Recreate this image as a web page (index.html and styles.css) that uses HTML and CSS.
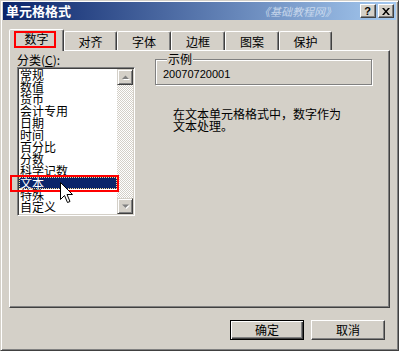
FILE: index.html
```html
<!DOCTYPE html>
<html lang="zh">
<head>
<meta charset="utf-8">
<title>单元格格式</title>
<link rel="stylesheet" href="styles.css">
</head>
<body>
<div class="window">
  <div class="titlebar">
    <span class="title">单元格格式</span>
    <span class="watermark">《基础教程网》</span>
    <div class="caption-btns">
      <span class="cap-btn help">?</span>
      <span class="cap-btn close"><svg width="8" height="7" viewBox="0 0 8 7"><path d="M0 0h2l2 2.5L6 0h2L5 3.5 8 7H6L4 4.5 2 7H0l3-3.5z" fill="#000"/></svg></span>
    </div>
  </div>
  <div class="content">
    <div class="tabs">
      <div class="tab active w55">数字<span class="mark mark-tab"></span></div>
      <div class="tab w53">对齐</div>
      <div class="tab w54">字体</div>
      <div class="tab w54">边框</div>
      <div class="tab w54">图案</div>
      <div class="tab w53">保护</div>
    </div>
    <div class="panel">
      <div class="left-col">
        <div class="label">分类(<u>C</u>):</div>
        <div class="listbox">
          <ul class="items">
            <li>常规</li>
            <li>数值</li>
            <li>货币</li>
            <li>会计专用</li>
            <li>日期</li>
            <li>时间</li>
            <li>百分比</li>
            <li>分数</li>
            <li>科学记数</li>
            <li class="selected">文本</li>
            <li>特殊</li>
            <li>自定义</li>
          </ul>
          <div class="scrollbar">
            <div class="sb-btn"><svg width="14" height="14" viewBox="0 0 14 14"><path d="M4 9h7L7.5 5.5z" fill="#fff" transform="translate(1 1)"/><path d="M4 9h7L7.5 5.5z" fill="#808080"/></svg></div>
            <div class="sb-track"></div>
            <div class="sb-btn"><svg width="14" height="14" viewBox="0 0 14 14"><path d="M4 5.5h7L7.5 9z" fill="#fff" transform="translate(1 1)"/><path d="M4 5.5h7L7.5 9z" fill="#808080"/></svg></div>
          </div>
        </div>
      </div>
      <div class="right-col">
        <fieldset class="sample">
          <legend>示例</legend>
          <div class="sample-value">20070720001</div>
        </fieldset>
        <p class="desc">在文本单元格格式中，数字作为文本处理。</p>
      </div>
    </div>
    <div class="buttons">
      <button class="btn default">确定</button>
      <button class="btn">取消</button>
    </div>
  </div>
  <div class="mark mark-item"></div>
  <svg class="cursor" width="14" height="22" viewBox="0 0 14 22"><path d="M0.5 0.5V17.5L4.5 13.5L7.5 20.5L10 19.5L7 12.5H12.5Z" fill="#fff" stroke="#000" stroke-width="1"/></svg>
</div>
</body>
</html>
```
FILE: styles.css
```css
* { box-sizing: border-box; }
html, body { margin: 0; padding: 0; }
body {
  width: 399px;
  height: 351px;
  overflow: hidden;
  background: #d4d0c8;
  font-family: "Noto Sans CJK SC", "Liberation Sans", sans-serif;
  font-size: 12px;
  line-height: 12px;
  color: #000;
}
.window {
  position: relative;
  width: 399px;
  height: 351px;
  background: #d4d0c8;
  border: 1px solid;
  border-color: #d4d0c8 #404040 #404040 #d4d0c8;
  box-shadow: inset 1px 1px #fff, inset -1px -1px #808080;
  padding: 1px 2px 0 2px;
}
.titlebar {
  height: 18px;
  display: flex;
  align-items: center;
  background: linear-gradient(to right, #0a246a, #a6caf0);
  padding: 0 2px 0 3px;
}
.title {
  color: #fff;
  font-weight: bold;
  font-size: 13px;
  line-height: 14px;
}
.watermark {
  margin-left: auto;
  margin-right: 24px;
  color: #dfe8f6;
  font-size: 11px;
  line-height: 12px;
  font-style: italic;
  opacity: 0.75;
}
.caption-btns { display: flex; gap: 2px; }
.cap-btn {
  width: 16px;
  height: 14px;
  background: #d4d0c8;
  border: 1px solid;
  border-color: #fff #404040 #404040 #fff;
  box-shadow: inset -1px -1px #808080;
  display: flex;
  align-items: center;
  justify-content: center;
  font: bold 11px/11px "Liberation Sans", sans-serif;
  padding-right: 1px;
}
.content { padding: 9px 6px 0 6px; }
.tabs {
  display: flex;
  align-items: flex-end;
  height: 21px;
}
.tab {
  position: relative;
  height: 19px;
  border: 1px solid;
  border-bottom: 0;
  border-color: #fff #404040 transparent #fff;
  border-radius: 2px 2px 0 0;
  box-shadow: inset -1px 0 #808080;
  text-align: center;
  padding-top: 4px;
}
.tab.active {
  height: 22px;
  margin-bottom: -1px;
  z-index: 1;
  background: #d4d0c8;
  padding-top: 3px;
}
.w53 { width: 53px; }
.w54 { width: 54px; }
.w55 { width: 55px; }
.mark { position: absolute; border: 2px solid #ff0000; pointer-events: none; }
.mark-tab { left: 4px; top: 1px; width: 42px; height: 17px; }
.mark-item { left: 9px; top: 174px; width: 109px; height: 17px; z-index: 2; }
.panel {
  height: 258px;
  border: 1px solid;
  border-color: #fff #404040 #404040 #fff;
  box-shadow: inset -1px -1px #808080;
  display: flex;
  padding: 3px 0 0 7px;
}
.left-col { width: 118px; }
.label { line-height: 12px; }
.label u { text-decoration: underline; }
.listbox {
  display: flex;
  margin-top: 1px;
  height: 149px;
  border: 1px solid;
  border-color: #808080 #fff #fff #808080;
  box-shadow: inset 1px 1px #404040, inset -1px -1px #d4d0c8;
  padding: 1px;
  background: #fff;
}
.items {
  list-style: none;
  margin: 0;
  padding: 0;
  flex: 1;
}
.items li {
  height: 12px;
  line-height: 12px;
  padding-left: 1px;
  white-space: nowrap;
}
.items li.selected {
  background: #0a246a;
  color: #fff;
  outline: 1px dotted #f5db95;
  outline-offset: -1px;
}
.scrollbar {
  width: 16px;
  display: flex;
  flex-direction: column;
}
.sb-btn {
  width: 16px;
  height: 16px;
  background: #d4d0c8;
  border: 1px solid;
  border-color: #d4d0c8 #404040 #404040 #d4d0c8;
  box-shadow: inset 1px 1px #fff, inset -1px -1px #808080;
}
.sb-btn svg { display: block; }
.sb-track {
  flex: 1;
  background-image: conic-gradient(#fff 0 25%, #d4d0c8 0 50%, #fff 0 75%, #d4d0c8 0);
  background-size: 2px 2px;
}
.right-col {
  margin-left: 20px;
  width: 217px;
}
.sample {
  margin: -1px 0 0 0;
  height: 32px;
  border: 1px solid #808080;
  box-shadow: inset 1px 1px #fff, 1px 1px #fff;
  padding: 3px 6px 0 7px;
  min-width: 0;
}
.sample legend {
  padding: 0 1px;
  margin-left: 4px;
  line-height: 12px;
  background: #d4d0c8;
}
.sample-value {
  font-family: "Liberation Sans", sans-serif;
  font-size: 11px;
  line-height: 13px;
}
.desc {
  margin: 23px 0 0 18px;
  width: 170px;
  line-height: 12px;
}
.buttons {
  display: flex;
  justify-content: flex-end;
  gap: 7px;
  margin-top: 12px;
  padding-right: 5px;
}
.btn {
  width: 74px;
  height: 20px;
  padding: 0;
  font-family: "Noto Sans CJK SC", sans-serif;
  font-size: 12px;
  line-height: 12px;
  color: #000;
  background: #d4d0c8;
  border: 1px solid;
  border-color: #fff #404040 #404040 #fff;
  box-shadow: inset -1px -1px #808080;
}
.btn.default {
  border-color: #000;
  box-shadow: inset 1px 1px #fff, inset -1px -1px #404040, inset -2px -2px #808080;
}
.cursor {
  position: absolute;
  left: 59px;
  top: 181px;
  z-index: 3;
}
```
